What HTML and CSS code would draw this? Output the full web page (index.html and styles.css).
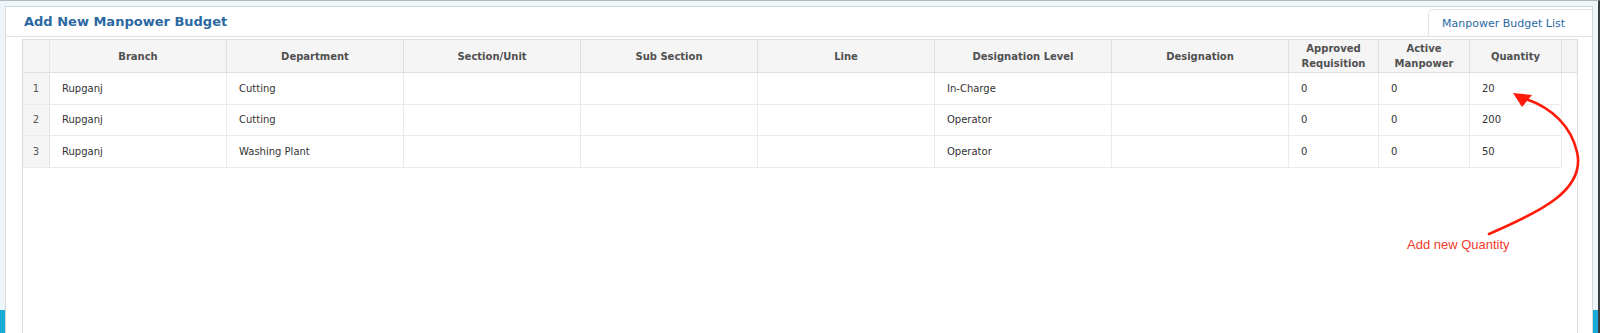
FILE: index.html
```html
<!DOCTYPE html>
<html lang="en">
<head>
  <meta charset="UTF-8">
  <meta name="viewport" content="width=device-width, initial-scale=1.0">
  <title>Add New Manpower Budget</title>
  <link rel="stylesheet" href="styles.css">
</head>
<body>
  <div class="frame">
    <div class="panel">
      <div class="panel-head">
        <h2>Add New Manpower Budget</h2>
        <a class="tab" href="#">Manpower Budget List</a>
      </div>
      <div class="panel-body">
        <div class="grid">
          <div class="row head">
            <div class="cell num"></div>
            <div class="cell">Branch</div>
            <div class="cell">Department</div>
            <div class="cell">Section/Unit</div>
            <div class="cell">Sub Section</div>
            <div class="cell">Line</div>
            <div class="cell">Designation Level</div>
            <div class="cell">Designation</div>
            <div class="cell">Approved<br>Requisition</div>
            <div class="cell">Active<br>Manpower</div>
            <div class="cell">Quantity</div>
            <div class="cell gutter"></div>
          </div>
          <div class="row">
            <div class="cell num">1</div>
            <div class="cell">Rupganj</div>
            <div class="cell">Cutting</div>
            <div class="cell"></div>
            <div class="cell"></div>
            <div class="cell"></div>
            <div class="cell">In-Charge</div>
            <div class="cell"></div>
            <div class="cell">0</div>
            <div class="cell">0</div>
            <div class="cell">20</div>
          </div>
          <div class="row">
            <div class="cell num">2</div>
            <div class="cell">Rupganj</div>
            <div class="cell">Cutting</div>
            <div class="cell"></div>
            <div class="cell"></div>
            <div class="cell"></div>
            <div class="cell">Operator</div>
            <div class="cell"></div>
            <div class="cell">0</div>
            <div class="cell">0</div>
            <div class="cell">200</div>
          </div>
          <div class="row">
            <div class="cell num">3</div>
            <div class="cell">Rupganj</div>
            <div class="cell">Washing Plant</div>
            <div class="cell"></div>
            <div class="cell"></div>
            <div class="cell"></div>
            <div class="cell">Operator</div>
            <div class="cell"></div>
            <div class="cell">0</div>
            <div class="cell">0</div>
            <div class="cell">50</div>
          </div>
        </div>
      </div>
    </div>
  </div>

  <!-- annotation drawn over the screenshot -->
  <svg class="note" width="1600" height="333" viewBox="0 0 1600 333">
    <path d="M1489 234 C1540 212 1586 190 1577 152 C1571 126 1552 108 1526 99" fill="none" stroke="#ff1a0a" stroke-width="2.6" stroke-linecap="round"/>
    <polygon points="1513,93 1532,95 1522,107" fill="#ff1a0a"/>
    <text x="1407" y="249" class="note-text">Add new Quantity</text>
  </svg>
</body>
</html>
```

FILE: styles.css
```css
html, body {
    height: 100%;
  }

  body {
    margin: 0;
    overflow: hidden;
    font-family: "DejaVu Sans", Verdana, sans-serif;
    font-size: 10px;
    color: #333;
    position: relative;
  }

  .frame {
    box-sizing: border-box;
    height: 100%;
    padding: 5px 5px 0 5px;
    border-top: 1px solid #b4b9be;
    border-right: 2px solid #3a3d40;
    background: linear-gradient(to bottom, #eef6fa 309px, #16acd6 309px);
  }

  .panel {
    box-sizing: border-box;
    height: 100%;
    background-color: #fff;
    border: 1px solid #d6d9dc;
    border-bottom: none;
    display: flex;
    flex-direction: column;
  }

  .panel-head {
    height: 29px;
    display: flex;
    justify-content: space-between;
    align-items: center;
    border-bottom: 1px solid #e3e3e3;
  }

  h2 {
    margin: 0 0 0 18px;
    font-size: 13px;
    font-weight: bold;
    color: #2c69a3;
  }

  .tab {
    align-self: flex-end;
    box-sizing: border-box;
    height: 27px;
    width: 164px;
    padding-left: 13px;
    display: flex;
    align-items: center;
    font-size: 11px;
    color: #2c69a3;
    text-decoration: none;
    border-top: 1px solid #e3e3e3;
    border-left: 1px solid #e3e3e3;
    border-top-left-radius: 5px;
  }

  .panel-body {
    flex: 1;
    display: flex;
    padding: 2px 14px 0 16px;
  }

  .grid {
    flex: 1;
    border-left: 1px solid #dcdcdc;
    border-right: 1px solid #dcdcdc;
  }

  .row {
    display: grid;
    grid-template-columns: 27px repeat(7, 177px) 90px 91px 92px 15px;
    height: 31.5px;
  }

  .row.head {
    box-sizing: border-box;
    height: 34px;
    background-color: #f5f5f5;
    border-top: 1px solid #e0e0e0;
  }

  .cell {
    box-sizing: border-box;
    border-right: 1px solid #ebebeb;
    border-bottom: 1px solid #ebebeb;
    padding: 0 12px;
    display: flex;
    align-items: center;
    white-space: nowrap;
  }

  .head .cell {
    justify-content: center;
    text-align: center;
    padding: 0 4px;
    font-weight: bold;
    color: #505050;
    line-height: 15px;
    border-right-color: #e0e0e0;
    border-bottom-color: #e0e0e0;
  }

  .head .gutter {
    border-right: none;
  }

  .cell.num {
    justify-content: center;
    padding: 0;
    background-color: #f5f5f5;
    color: #555;
    border-right-color: #e4e4e4;
  }

  .note {
    position: absolute;
    left: 0;
    top: 0;
    pointer-events: none;
  }

  .note-text {
    font-family: "Liberation Sans", Arial, sans-serif;
    font-size: 13px;
    fill: #f23a2e;
  }
```
